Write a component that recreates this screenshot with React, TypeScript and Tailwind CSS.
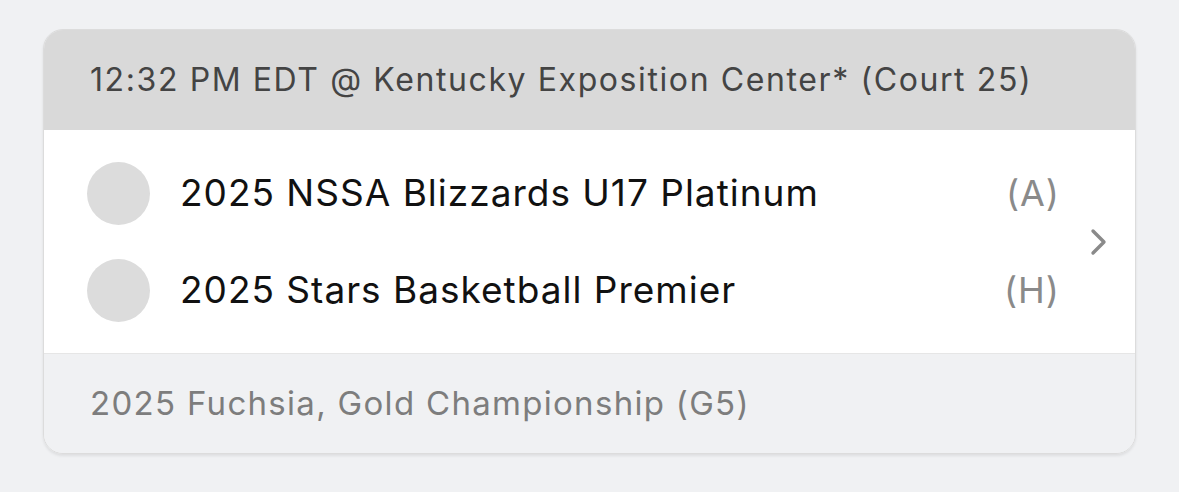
export default function App() {
  return (
    <div className="min-h-[492px] w-[1179px] bg-[#f0f1f3] pt-[29px] font-['Inter',sans-serif]">
      <div className="ml-[43px] w-[1093px] overflow-hidden rounded-[20px] border border-[#dcdcdc] shadow-[0_2px_3px_rgba(0,0,0,0.08)]">
        <div className="flex h-[100px] items-center bg-[#d9d9d9] pl-[46px] text-[32px] tracking-[1.6px] text-[#444]">
          12:32 PM EDT @ Kentucky Exposition Center* (Court 25)
        </div>
        <div className="flex h-[223px] items-center bg-white">
          <div className="flex flex-1 flex-col gap-[34px] pl-[43px] pr-[30px]">
            <div className="flex items-center">
              <div className="h-[63px] w-[63px] rounded-full bg-[#dcdcdc]" />
              <div className="ml-[30px] flex-1 text-[37px] tracking-[1px] text-[#111]">2025 NSSA Blizzards U17 Platinum</div>
              <div className="text-[36px] tracking-[1px] text-[#8a8a8a]">(A)</div>
            </div>
            <div className="flex items-center">
              <div className="h-[63px] w-[63px] rounded-full bg-[#dcdcdc]" />
              <div className="ml-[30px] flex-1 text-[37px] tracking-[1px] text-[#111]">2025 Stars Basketball Premier</div>
              <div className="text-[36px] tracking-[1px] text-[#8a8a8a]">(H)</div>
            </div>
          </div>
          <svg width="18" height="30" viewBox="0 0 18 30" className="mr-[27px]">
            <path d="M3 4 L14 15 L3 26" fill="none" stroke="#8a8a8a" strokeWidth="3.4" strokeLinecap="round" strokeLinejoin="round" />
          </svg>
        </div>
        <div className="flex h-[100px] items-center border-t border-[#e6e6e6] bg-[#f0f1f3] pl-[46px] text-[33px] tracking-[1.3px] text-[#7d7d7d]">
          2025 Fuchsia, Gold Championship (G5)
        </div>
      </div>
    </div>
  );
}
